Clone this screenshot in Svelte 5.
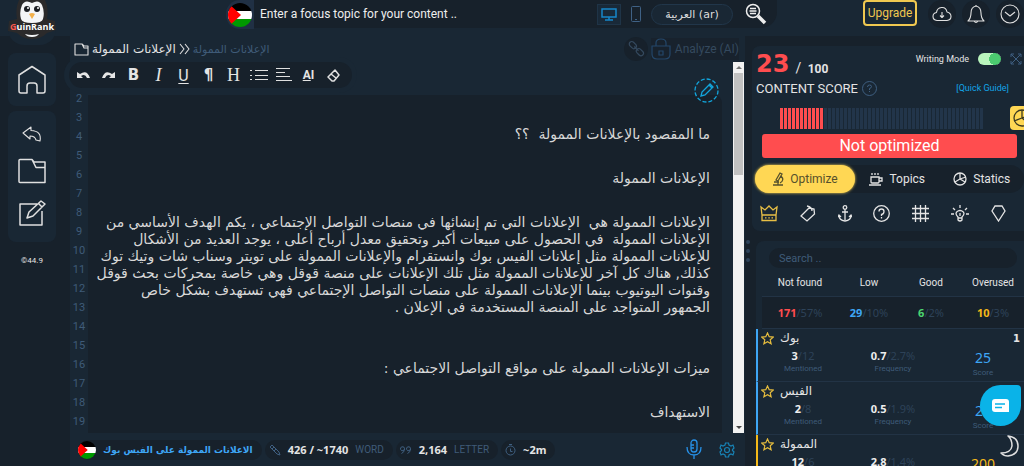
<script lang="ts">
    let topic = $state('');
    let lang = $state('ar');
    let search = $state('');
    let writingMode = $state(true);
    let tab = $state('Optimize');

    const score = 23;
    const bars = Array.from({ length: 51 }, (_, i) => i < 11);
    const lines = Array.from({ length: 18 }, (_, i) => i + 2);

    const intro = [
        'الإعلانات الممولة هي  الإعلانات التي تم إنشائها في منصات التواصل الإجتماعي ، يكم الهدف الأساسي من',
        'الإعلانات الممولة  في الحصول على مبيعات أكبر وتحقيق معدل أرباح أعلى ، يوجد العديد من الأشكال',
        'للإعلانات الممولة مثل إعلانات الفيس بوك وانستقرام والإعلانات الممولة على تويتر وسناب شات وتيك توك',
        'كذلك, هناك كل آخر للإعلانات الممولة مثل تلك الإعلانات على منصة قوقل وهي خاصة بمحركات بحث قوقل',
        'وقنوات اليوتيوب بينما الإعلانات الممولة على منصات التواصل الإجتماعي فهي تستهدف بشكل خاص',
        'الجمهور المتواجد على المنصة المستخدمة في الإعلان .',
    ];

    const totals = [
        { label: 'Not found', count: 171, pct: '57%', color: 'red' },
        { label: 'Low', count: 29, pct: '10%', color: 'blue' },
        { label: 'Good', count: 6, pct: '2%', color: 'green' },
        { label: 'Overused', count: 10, pct: '3%', color: 'yellow' },
    ];

    const keywords = [
        { word: 'بوك', used: 3, goal: 12, freq: '0.7', max: '2.7%', score: 25, color: 'blue', rank: '1' },
        { word: 'الفيس', used: 2, goal: 8, freq: '0.5', max: '1.9%', score: 25, color: 'blue', rank: '' },
        { word: 'الممولة', used: 12, goal: 6, freq: '2.8', max: '1.4%', score: 200, color: 'yellow', rank: '' },
    ];
</script>

{#snippet flag(size: number)}
    <svg class="flag" width={size} height={size} viewBox="0 0 24 24">
        <clipPath id="round{size}"><circle cx="12" cy="12" r="12" /></clipPath>
        <g clip-path="url(#round{size})">
            <path fill="#000" d="M0 0h24v8H0z" />
            <path fill="#fff" d="M0 8h24v8H0z" />
            <path fill="#090" d="M0 16h24v8H0z" />
            <path fill="#f00" d="M0 0v24l13-12z" />
        </g>
    </svg>
{/snippet}

<div class="app">
    <aside class="sidebar">
        <a class="logo" href="#home" aria-label="GuinRank">
            <svg width="48" height="40" viewBox="0 0 48 40">
                <path fill="#2b2a2b" d="M11 0h26q4 9 2 19l8 2 1 9-9 3q-6 6-15 6T9 33l-9-2 1-10 8-2Q7 9 11 0z" />
                <path fill="#f4f5f7" d="M14 5q3-6 10-2 7-4 10 2 3 7 1 14-1 4-11 4t-11-4q-2-7 1-14z" />
                <path fill="#f4f5f7" d="M17 34q7 2 14 0-2 3-7 3t-7-3z" />
                <circle cx="19" cy="9" r="3" fill="#1d1f24" /><circle cx="29" cy="9" r="3" fill="#1d1f24" />
                <circle cx="20" cy="8" r="1" fill="#fff" /><circle cx="30" cy="8" r="1" fill="#fff" />
                <path fill="#f3b04b" d="M21 14q3-2 6 0l-3 5z" />
                <text class="logo-text" x="24" y="30" text-anchor="middle"><tspan fill="#ff5a50">G</tspan>uinRank</text>
            </svg>
        </a>
        <nav>
            <a class="box" href="#dashboard" aria-label="Home">
                <svg class="ico" width="30" height="30" viewBox="0 0 30 30"><path d="M15 1.500 2 10v16q0 2 2 2h6v-7q0-3 3-3h4q3 0 3 3v7h6q2 0 2-2V10z" /></svg>
            </a>
            <div class="box tall">
                <a href="#back" aria-label="Back"><svg class="ico thin" width="20" height="16" viewBox="0 0 20 16"><path d="M9 1 1 7l7 6v-3q5 0 6 4l4 1Q20 5 9 4.500z" /></svg></a>
                <a href="#files" aria-label="Files"><svg class="ico" width="28" height="26" viewBox="0 0 28 26"><path d="M2 1.500h12l2 2.500h11V24.500H2q-1 0-1-1v-21q0-1 1-1zM14 1.500l4 8h9" /></svg></a>
                <a href="#edit" aria-label="Write"><svg class="ico" width="28" height="28" viewBox="0 0 28 28"><path d="M19 5H2v21h22V12M9 19l2-6L23 2l4 3-12 12zM20 4l4 4" /></svg></a>
            </div>
        </nav>
        <small>©44.9</small>
    </aside>

    <header>
        <label class="flag-box" for="topic">{@render flag(24)}</label>
        <div class="topic">
            <input id="topic" aria-label="Focus topic" placeholder="Enter a focus topic for your content .." bind:value={topic} />
            <button class="device on" aria-label="Desktop"><svg width="16" height="13" viewBox="0 0 16 13"><path fill="none" stroke="#1686c9" stroke-width="1.500" d="M1 1h14v8H1zM8 9v3M4 12h8" /></svg></button>
            <button class="device" aria-label="Mobile"><svg width="10" height="16" viewBox="0 0 10 16"><path fill="none" stroke="#3f6185" d="M1.500.500h7q1 0 1 1v13q0 1-1 1h-7q-1 0-1-1v-13q0-1 1-1zM4 13.500h2" /></svg></button>
            <select aria-label="Language" bind:value={lang}>
                <option value="ar">العربية (ar)</option>
                <option value="en">English (en)</option>
            </select>
            <button class="find" aria-label="Search">
                <svg width="22" height="22" viewBox="0 0 22 22"><circle cx="8" cy="8" r="6.500" fill="none" stroke="#eee" stroke-width="1.500" /><path fill="none" stroke="#eee" stroke-width="1.500" d="M5 5.500h6M4.500 8h7M5 10.500h6" /><path stroke="#eee" stroke-width="3.500" d="m13 13 7 7" /></svg>
            </button>
        </div>
        <button class="upgrade">Upgrade</button>
        <button class="round" aria-label="Save"><svg class="ico thin" width="20" height="16" viewBox="0 0 20 16"><path d="M5 14.500Q1 14 1 10.500T4.500 6.500Q5 2 9.500 1.500T15 6q4 1 4 4.500t-4 4zM10 6v5M8 9.500l2 2 2-2" /></svg></button>
        <button class="round" aria-label="Notifications"><svg class="ico thin" width="18" height="20" viewBox="0 0 18 20"><path d="M9 1v1Q4 3 4 9q0 5-3 8h16q-3-3-3-8 0-6-5-7M7 17q2 3 4 0" /></svg></button>
        <button class="round" aria-label="Account"><svg class="ico thin" width="20" height="20" viewBox="0 0 20 20"><circle cx="10" cy="10" r="9" /><path d="m5 8 5 4 5-4" /></svg></button>
    </header>

    <main>
        <div class="crumbs">
            <a href="#folder">
                <svg class="ico thin" width="15" height="13" viewBox="0 0 15 13"><path d="M1 1h7l2 2h4v9H1zM8 1l2 4h4" /></svg>
                <span dir="rtl">الإعلانات الممولة</span>
            </a>
            <svg class="ico thin" width="11" height="12" viewBox="0 0 11 12"><path d="m1 1 4 5-4 5M6 1l4 5-4 5" /></svg>
            <span class="current" dir="rtl">الإعلانات الممولة</span>
            <button class="link" aria-label="Links"><svg width="18" height="18" viewBox="0 0 18 18"><g fill="none" stroke="#34495e" stroke-width="1.200" transform="rotate(45 9 9)"><rect x="0" y="6" width="8" height="5" rx="2.500" /><rect x="10" y="6" width="8" height="5" rx="2.500" /><path d="M6 8.500h6" /></g></svg></button>
            <button class="analyze"><svg width="20" height="22" viewBox="0 0 20 22"><path fill="none" stroke="#24476a" stroke-width="1.200" d="M1 8h18v8q0 5-5 5H6q-5 0-5-5zM5 8V5q0-4 5-4t5 4v3M8 13h4v4H8z" /></svg>Analyze (AI)</button>
        </div>

        <div class="toolbar" role="toolbar" aria-label="Format">
            <button aria-label="Undo"><svg width="13" height="8" viewBox="0 0 13 8"><path fill="#e6e6e6" d="M0 1v6h6L4 5q4-3 6 2h3Q10-2 3 3z" /></svg></button>
            <button aria-label="Redo"><svg width="13" height="8" viewBox="0 0 13 8"><path fill="#e6e6e6" d="M13 1v6H7l2-2Q5 2 3 7H0q3-9 10-4z" /></svg></button>
            <button class="bold">B</button>
            <button class="italic">I</button>
            <button class="under">U</button>
            <button class="bold">¶</button>
            <button class="head">H</button>
            <button aria-label="List"><svg class="ico thin" width="18" height="12" viewBox="0 0 18 12"><path d="M0 1.500h2M0 6.500h2M0 10.500h2M5 1.500h13M5 6.500h13M5 10.500h13" /></svg></button>
            <button aria-label="Align"><svg class="ico thin" width="16" height="14" viewBox="0 0 16 14"><path d="M0 .500h14M0 4.500h9M0 8.500h14M0 12.500h16" /></svg></button>
            <button class="ai"><u>A</u>I</button>
            <button aria-label="Clear format"><svg class="ico" width="13" height="13" viewBox="0 0 13 13"><path d="M8 1 1 8l4 4h2l5-6zM4 5l5 4" /></svg></button>
        </div>

        <div class="sheet">
            <ol>
                {#each lines as n}<li>{n}</li>{/each}
            </ol>
            <article dir="rtl">
                <p>ما المقصود بالإعلانات الممولة  ؟؟</p>
                <p>الإعلانات الممولة</p>
                <p>{#each intro as line}{line}<br />{/each}</p>
                <p class="apart">ميزات الإعلانات الممولة على مواقع التواصل الاجتماعي :</p>
                <p>الاستهداف</p>
            </article>
            <button class="pen" aria-label="Edit">
                <svg width="25" height="25" viewBox="0 0 25 25"><g fill="none" stroke="#12a5dc" stroke-width="1.300"><circle cx="12.500" cy="12.500" r="11.500" stroke-dasharray="4 2" /><path d="m7 18 1-4 8-8 3 3-8 8zM15 7l3 3" /></g></svg>
            </button>
        </div>
        <div class="scroll"><i class="up"></i><div class="thumb"></div><i class="down"></i></div>

        <footer>
            <span class="pill title">{@render flag(18)}<b dir="rtl">الاعلانات الممولة على الفيس بوك</b></span>
            <span class="pill"><svg width="12" height="12" viewBox="0 0 12 12"><path fill="none" stroke="#3f5f80" d="m1 3 2-2 7 7 1 3-3-1zM3 5l2-2M5 7l2-2" /></svg><b>426 / ~1740</b> WORD</span>
            <span class="pill"><svg width="12" height="10" viewBox="0 0 12 10"><path fill="none" stroke="#3f5f80" d="M4.500 3.500a2 2 0 1 0-1 2q1 0 1-2 0 4-3 5M10.500 3.500a2 2 0 1 0-1 2q1 0 1-2 0 4-3 5" /></svg><b>2,164</b> LETTER</span>
            <span class="pill"><svg width="11" height="12" viewBox="0 0 11 12"><path fill="none" stroke="#3f5f80" d="M4 .500h3M5.500 4.500v3h2" /><circle cx="5.500" cy="6.500" r="4.500" fill="none" stroke="#3f5f80" /></svg><b>~2m</b></span>
            <button class="mic" aria-label="Dictate"><svg width="16" height="21" viewBox="0 0 16 21"><g fill="none" stroke="#2791e8" stroke-width="1.300"><rect x="5" y="1" width="6" height="12" rx="3" /><path d="M1 8q0 8 7 8t7-8M8 16v4M5 6h3M5 9h3" /></g></svg></button>
            <button aria-label="Settings"><svg width="16" height="16" viewBox="0 0 16 16"><g fill="none" stroke="#1782b5" stroke-width="1.200"><path d="M6.500 1h3l.500 2 2 1 2-1 1 3-1.500 1.500v1L15 10l-1 3-2-1-2 1-.500 2h-3L6 13l-2-1-2 1-1-3 1.500-1.500v-1L1 6l1-3 2 1 2-1z" /><circle cx="8" cy="8" r="2.500" /></g></svg></button>
        </footer>
    </main>

    <div class="handle"><i></i><i></i><i></i></div>

    <section class="panel">
        <div class="card">
            <div class="score-row">
                <strong>{score}</strong><span class="of">/ <b>100</b></span>
                <label class="mode">Writing Mode <input type="checkbox" bind:checked={writingMode} /></label>
                <button aria-label="Expand"><svg width="12" height="12" viewBox="0 0 12 12"><path fill="none" stroke="#3f5f80" d="m1 1 10 10M11 1 1 11M1 4V1h3M8 1h3v3M11 8v3H8M4 11H1V8" /></svg></button>
            </div>
            <div class="title-row">
                <h2>CONTENT SCORE</h2>
                <svg width="15" height="15" viewBox="0 0 15 15"><g fill="none" stroke="#3f5f80"><circle cx="7.500" cy="7.500" r="7" /><path d="M5.500 6q0-2 2-2t2 1.500-2 2v1.500M7.500 10v1" /></g></svg>
                <a href="#guide">[Quick Guide]</a>
            </div>
            <div class="meter">
                <div class="bars">{#each bars as on}<i class:filled={on}></i>{/each}</div>
                <button aria-label="Chart"><svg width="20" height="20" viewBox="0 0 20 20"><g fill="none" stroke="#3b3a22" stroke-width="1.300"><circle cx="10" cy="10" r="8" /><path d="M10 10V2M10 10l-8 3M10 10l6 5M10 10l8-3" /></g></svg></button>
            </div>
            <div class="verdict">Not optimized</div>
            <div class="tabs">
                <button class:active={tab === 'Optimize'} onclick={() => (tab = 'Optimize')}><svg width="12" height="14" viewBox="0 0 12 14"><path d="m4 8 4-7 2 1-4 7zM9 4q4 4-1 7M2 10h5M1 13h10M6 10v3" /></svg>Optimize</button>
                <button class:active={tab === 'Topics'} onclick={() => (tab = 'Topics')}><svg width="14" height="14" viewBox="0 0 14 14"><path d="M2 5h8v5q0 1-1 1H3q-1 0-1-1zM10 6h3v3h-3M0 13h12M3 1v2M6 1v2M9 1v2" /></svg>Topics</button>
                <button class:active={tab === 'Statics'} onclick={() => (tab = 'Statics')}><svg width="14" height="14" viewBox="0 0 14 14"><circle cx="7" cy="7" r="6" /><path d="M7 1v6L2 10M7 7l5 3M7 7l6-2" /></svg>Statics</button>
            </div>
            <div class="filters">
                <button class="gold" aria-label="Top"><svg width="18" height="17" viewBox="0 0 18 17"><path d="M2 10 1 2l4 3 4-4 4 4 4-3-1 8zM2 10v5.500h14V10M5 12.800h1.500M8.300 12.800h1.500M11.500 12.800H13" /></svg></button>
                <button aria-label="Tags"><svg width="16" height="17" viewBox="0 0 16 17"><path d="m9 3 5 1 .500 5L7 16l-6-5zM7 1q5 1 5 5" /></svg></button>
                <button aria-label="Anchors"><svg width="14" height="17" viewBox="0 0 14 17"><circle cx="7" cy="2.500" r="1.800" /><path d="M7 4.500V15M4 7h6M1 11q0 4 6 5 6-1 6-5M0 12l1-2 2 2M11 12l2-2 1 2" /></svg></button>
                <button aria-label="Questions"><svg width="17" height="17" viewBox="0 0 17 17"><circle cx="8.500" cy="8.500" r="7.800" /><path d="M6 6.500q0-2.500 2.500-2.500T11 6.500t-2.500 3V11M8.500 12v1.500" /></svg></button>
                <button aria-label="Grid"><svg width="17" height="17" viewBox="0 0 17 17"><path d="M3.500 0v17M8.500 0v17M13.500 0v17M0 3.500h17M0 8.500h17M0 13.500h17" /></svg></button>
                <button aria-label="Ideas"><svg width="18" height="17" viewBox="0 0 18 17"><path d="M7 12Q3 8 7 6q2-1 4 0 4 2 0 6v3q-2 2-4 0zM7 13h4M9 0v3M2 3l2 2M16 3l-2 2M0 9h3M15 9h3M9 8v3" /></svg></button>
                <button aria-label="Gems"><svg width="15" height="17" viewBox="0 0 15 17"><path d="M4 1h7l3 5-6.500 10L1 6z" /></svg></button>
            </div>
        </div>

        <div class="card list">
            <input class="search" type="search" aria-label="Search keywords" placeholder="Search .." bind:value={search} />
            <table>
                <thead><tr>{#each totals as t}<th>{t.label}</th>{/each}</tr></thead>
                <tbody><tr>{#each totals as t}<td><b class={t.color}>{t.count}</b>/{t.pct}</td>{/each}</tr></tbody>
            </table>
            {#each keywords as k}
                <div class="keyword {k.color}-edge">
                    <div class="word">
                        <svg width="13" height="13" viewBox="0 0 13 13"><path fill="none" stroke="#e6bd3e" stroke-width="1.200" d="m6.500 1 1.700 3.700 4 .400-3 2.700.900 4-3.600-2-3.600 2 .900-4-3-2.700 4-.400z" /></svg>
                        <span dir="rtl">{k.word}</span><b>{k.rank}</b>
                    </div>
                    <div class="nums">
                        <div><span><b>{k.used}</b>/{k.goal}</span><small>Mentioned</small></div>
                        <div><span><b>{k.freq}</b>/{k.max}</span><small>Frequency</small></div>
                        <div class="total"><span class={k.color}>{k.score}</span><small>Score</small></div>
                    </div>
                </div>
            {/each}
        </div>
    </section>

    <button class="chat" aria-label="Chat"><svg width="17" height="13" viewBox="0 0 17 13"><path fill="#fff" d="M3 0h11q3 0 3 3v10H3q-3 0-3-3V3q0-3 3-3z" /><path stroke="#0ab3e8" stroke-width="1.500" d="M3 5h10M3 8.500h7" /></svg></button>
    <button class="moon" aria-label="Night mode"><svg class="ico" width="20" height="22" viewBox="0 0 20 22"><path d="M8 1q10 1 10 10T8 21q-4 0-7-3 10 0 11-7Q12 4 8 1z" /></svg></button>
</div>

<style>
    :global(body) { background: #17212b; overflow: hidden; }
    .app {
        --dark: #17212b;
        --pane: #192734;
        --dim: #3f5b78;
        --faint: #2d4258;
        --narrow: 'Roboto', sans-serif;
        --wide: 'DejaVu Sans', sans-serif;
        position: relative;
        display: grid;
        grid-template-columns: 70px minmax(0, 1fr) 7px 272px;
        grid-template-rows: 36px minmax(0, 1fr);
        height: 100vh;
        overflow: hidden;
        background: var(--dark);
        color: #e4e4e4;
        font-family: var(--narrow);
        font-size: 12px;
    }
    button { padding: 0; border: 0; background: none; color: inherit; font: inherit; cursor: pointer; }
    a { color: inherit; text-decoration: none; }
    svg { display: block; flex: none; }
    .ico { fill: none; stroke: #e0e0e0; stroke-width: 1.5; stroke-linejoin: round; }
    .thin { stroke-width: 1.1; }
    .red { color: #ff4d4f; }
    .blue { color: #3ea6f5; }
    .green { color: #4cd670; }
    .yellow { color: #f5b919; }

    .sidebar { grid-row: 1 / 3; display: flex; flex-direction: column; padding: 0 14px 0 8px; text-align: center; background: linear-gradient(var(--pane) 36px, transparent 36px); }
    .logo { display: flex; justify-content: center; height: 45px; border-radius: 0 0 16px 16px; background: var(--pane); }
    .logo-text { font: bold 9px 'Open Sans', sans-serif; fill: #fff; }
    nav { display: grid; gap: 5px; margin-top: 8px; }
    .box { display: grid; place-items: center; height: 53px; border-radius: 8px; background: var(--pane); }
    .tall { height: 131px; align-content: space-evenly; }
    .sidebar small { margin-top: 14px; font: 8px var(--narrow); }

    header { grid-column: 2 / 5; display: flex; align-items: flex-start; background: var(--pane); }
    .flag-box { display: grid; place-items: center; width: 28px; height: 29px; margin-left: 156px; border-radius: 14px 0 0 14px; background: #203044; }
    .topic { display: flex; align-items: center; flex: 1; height: 28px; margin-right: 86px; padding-right: 10px; border-radius: 0 0 16px 0; background: var(--dark); }
    .topic input { flex: 1; min-width: 0; padding: 0 6px; border: 0; background: none; color: #eee; font: 12px var(--narrow); }
    .topic input::placeholder { color: #eee; }
    .device { display: grid; place-items: center; width: 24px; height: 21px; margin-right: 3px; }
    .on { border: 1px solid #1f3447; background: #192938; }
    select { appearance: none; width: 82px; height: 21px; border: 1px solid #21364a; border-radius: 11px; background: var(--pane); color: #ddd; font: 11px var(--wide); text-align: center; text-align-last: center; }
    .find { margin-left: 12px; }
    .upgrade { width: 54px; height: 26px; border: 2px solid #f0c850; border-radius: 4px; color: #f0c850; }
    .round { display: grid; place-items: center; width: 28px; height: 28px; margin-left: 6px; border-radius: 50%; background: var(--dark); }
    .upgrade + .round { margin-left: 11px; }

    main { display: grid; grid-template-columns: minmax(0, 1fr) 12px; grid-template-rows: 26px 27px minmax(0, 1fr) 33px; background: var(--pane); }
    .crumbs { grid-column: 1 / 3; display: flex; align-items: center; gap: 3px; padding: 0 6px 0 4px; font: 12px var(--wide); }
    .crumbs a { display: flex; align-items: center; gap: 3px; }
    .current { color: var(--dim); font-size: 11px; }
    .link { display: grid; place-items: center; width: 24px; height: 24px; margin-left: auto; border-radius: 50%; background: var(--dark); }
    .analyze { display: flex; align-items: center; gap: 4px; height: 22px; color: #34495e; font: 12px var(--narrow); background: #18222d; }
    .toolbar { display: flex; align-items: center; justify-self: start; z-index: 1; height: 26px; margin-left: -1px; padding: 0 6px 0 2px; border-radius: 13px; background: var(--dark); box-shadow: 0 0 0 5px var(--pane); font-size: 16px; }
    .toolbar button { display: grid; place-items: center; width: 25px; }
    .toolbar .bold { font: bold 15px var(--wide); }
    .toolbar .italic { font: italic 18px 'Liberation Serif', serif; }
    .under { text-decoration: underline; text-underline-offset: 2px; }
    .toolbar .head { font: 18px 'Liberation Serif', serif; }
    .toolbar .ai { display: block; font-size: 12px; font-weight: bold; }
    .sheet { grid-row: 3; position: relative; display: grid; grid-template-columns: 18px minmax(0, 1fr); grid-template-rows: minmax(0, 1fr); min-height: 0; padding-right: 11px; }
    ol { margin: 0; padding: 0; overflow: hidden; list-style: none; color: var(--dim); font: 11px/19px var(--narrow); text-align: center; }
    article { overflow: hidden; margin-top: 6px; padding: 31px 12px 0 0; background: var(--dark); font: 14px/17px var(--wide); color: #d8d8d8; border-radius: 0 8px 0 0; }
    p { margin: 0 0 27px; white-space: pre; }
    .apart { padding-top: 17px; }
    .pen { position: absolute; top: -11px; right: 14px; }
    .scroll { grid-column: 2; grid-row: 2 / 4; display: flex; flex-direction: column; align-items: center; margin-right: 1px; background: #f2f2f2; }
    .scroll i { margin: 4px 0; border: 3px solid transparent; }
    .scroll .up { border-bottom-color: #777; border-top: 0; }
    .scroll .down { border-top-color: #444; border-bottom: 0; margin-top: auto; }
    .thumb { width: 9px; height: 102px; background: #c1c1c1; }
    footer { grid-column: 1 / 3; display: flex; align-items: center; gap: 3px; padding: 0 10px 0 8px; }
    .pill { display: flex; align-items: center; gap: 7px; height: 20px; padding: 0 9px 0 4px; border-radius: 10px; background: var(--dark); color: var(--dim); font-size: 10px; white-space: nowrap; }
    .pill b { color: #e4e4e4; font: bold 11px 'Noto Sans', sans-serif; }
    .pill.title { padding-left: 0; }
    .title b { color: #3ea6f5; font: bold 9px var(--wide); }
    .mic { margin: 0 14px 0 auto; }

    .handle { display: flex; flex-direction: column; justify-content: center; gap: 5px; padding: 0 0 0 1px; }
    .handle i { width: 4px; height: 4px; border-radius: 50%; background: #2c4259; }

    .panel { display: flex; flex-direction: column; gap: 10px; padding-top: 10px; min-height: 0; overflow: hidden; }
    .card { flex: none; border-radius: 8px 0 0 8px; background: var(--pane); }
    .score-row { display: flex; align-items: center; height: 31px; padding: 2px 2px 0 4px; }
    strong { color: #ff4d4f; font: bold 24px/30px var(--wide); }
    .of { margin: 8px 0 0 6px; font-size: 14px; }
    .of b { margin-left: 3px; font: bold 12px 'Roboto', sans-serif; }
    .mode { display: flex; align-items: center; gap: 9px; margin: -10px 9px 0 auto; font-size: 9px; }
    .score-row button { margin-top: -10px; }
    .mode input { appearance: none; width: 23px; height: 12px; margin: 0; border-radius: 6px; background: radial-gradient(circle at 17px 6px, #4ccb70 6px, #b9f5bd 6px); }
    .title-row { display: flex; align-items: center; gap: 4px; height: 18px; padding: 0 15px 0 4px; }
    h2 { margin: 0; font: 13px var(--narrow); }
    .title-row a { margin-left: auto; color: #12a5e8; font-size: 9px; }
    .meter { display: flex; align-items: center; justify-content: space-between; height: 24px; margin: 9px 0 4px 28px; }
    .bars { display: flex; gap: 1px; height: 21px; }
    .bars i { width: 3px; background: #22354a; }
    .bars .filled { background: #ff4d4f; }
    .meter button { width: 14px; height: 24px; overflow: hidden; padding-left: 2px; border-radius: 4px 0 0 4px; background: #ffd754; }
    .verdict { margin: 0 7px 0 10px; border-radius: 3px; background: #ff4d4f; color: #fff; font-size: 16px; line-height: 24px; text-align: center; }
    .tabs { display: flex; height: 28px; margin: 7px 0 0 3px; border-radius: 14px; background: var(--dark); }
    .tabs button { display: flex; align-items: center; justify-content: center; gap: 6px; flex: 1; border-radius: 14px; }
    .tabs .active { flex: 0 0 100px; background: #ffd754; color: #55502c; box-shadow: 0 0 3px #ffd754; }
    .tabs svg, .filters svg { fill: none; stroke: currentColor; stroke-width: 1.3; }
    .filters { display: flex; justify-content: space-between; padding: 11px 18px 0 8px; height: 27px; }
    .filters .gold { color: #e8bf45; }
    .filters button { display: grid; place-items: center; height: 18px; }
    .list { margin-left: 4px; padding-top: 7px; }
    .search { display: block; box-sizing: border-box; width: 248px; height: 20px; margin: 0 0 0 13px; padding: 0 10px; border: 0; border-radius: 10px; background: var(--dark); color: #ddd; font: 11px var(--narrow); }
    .search::placeholder { color: var(--dim); }
    table { width: 262px; margin-left: 6px; border-spacing: 0; table-layout: fixed; }
    th { height: 28px; padding: 0; border-bottom: 1px solid #223345; font: 10px var(--narrow); white-space: nowrap; }
    th:first-child { width: 76px; }
    td { height: 31px; padding: 0; color: var(--faint); font: 11px 'Noto Sans', sans-serif; text-align: center; background: var(--dark); border-bottom: 1px solid #223345; }
    .keyword { height: 52px; border-left: 2px solid; border-bottom: 1px solid #223345; }
    .blue-edge { border-left-color: #3ea6f5; }
    .yellow-edge { border-left-color: #f5b919; }
    .word { display: flex; align-items: center; gap: 6px; height: 18px; padding: 0 4px 0 3px; font: 12px var(--wide); }
    .word b { margin-left: auto; font-size: 10px; }
    .nums { display: grid; grid-template-columns: repeat(3, 90px); text-align: center; color: var(--faint); }
    .nums div { display: grid; align-content: start; margin-top: 2px; font: 11px/14px 'Noto Sans', sans-serif; }
    .nums b { color: #eee; }
    .nums small { color: var(--dim); font: 8px/12px var(--narrow); }
    .nums .total { font-size: 14px; line-height: 18px; }
    .chat { position: absolute; right: 3px; bottom: 40px; display: grid; place-items: center; width: 41px; height: 41px; border-radius: 50% 4px 50% 50%; background: #0ab3e8; }
    .moon { position: absolute; right: 4px; bottom: 9px; }
</style>
